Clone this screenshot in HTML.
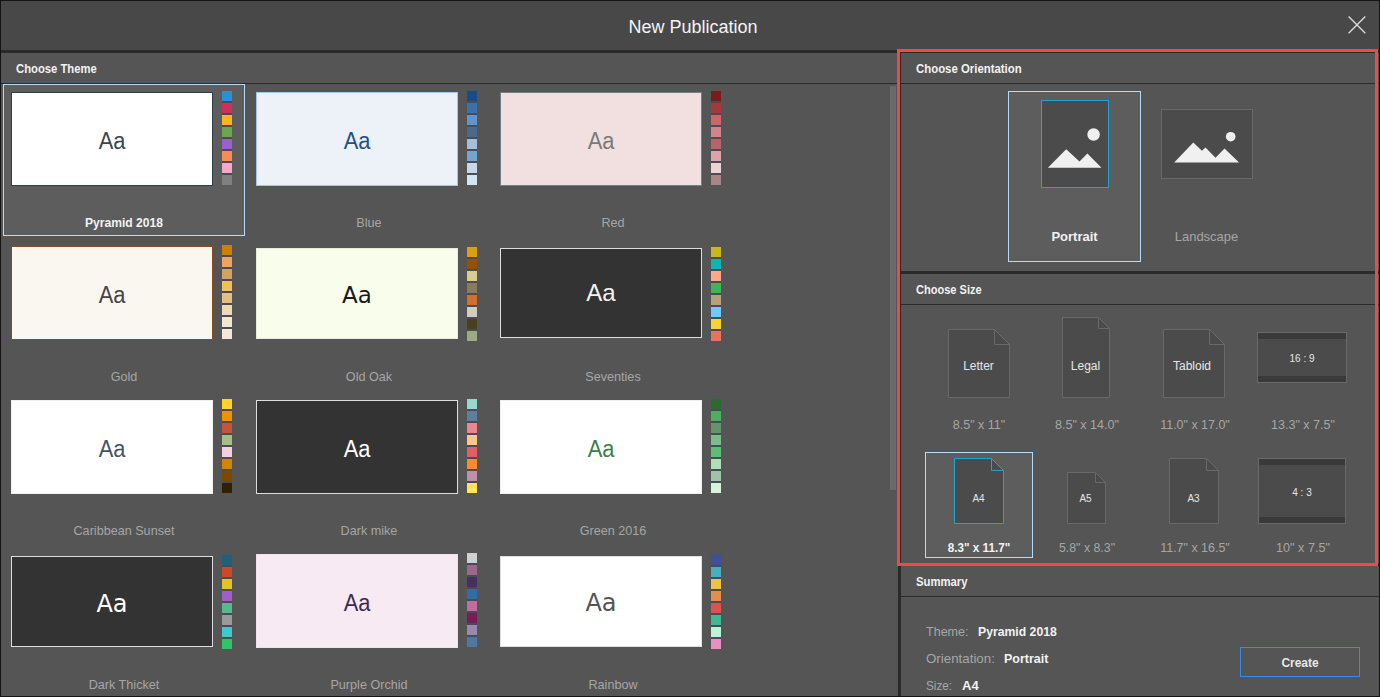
<!DOCTYPE html>
<html lang="en">
<head>
<meta charset="utf-8">
<title>New Publication</title>
<style>
html,body{margin:0;padding:0;}
body{width:1380px;height:697px;overflow:hidden;position:relative;background:#555555;font-family:"Liberation Sans", sans-serif;}
.r{position:absolute;box-sizing:content-box;}
.t{position:absolute;line-height:20px;white-space:nowrap;}
.pv{text-align:center;}
</style>
</head>
<body>
<div class="r" style="left:0px;top:0px;width:1380px;height:697px;background:#141414;"></div>
<div class="r" style="left:1px;top:1px;width:1378px;height:49px;background:#484848;"></div>
<div class="r" style="left:1px;top:50px;width:1378px;height:3px;background:#2a2a2a;"></div>
<div class="r" style="left:1px;top:53px;width:897px;height:643px;background:#555555;"></div>
<div class="r" style="left:898px;top:50px;width:3px;height:646px;background:#2a2a2a;"></div>
<div class="r" style="left:901px;top:53px;width:478px;height:643px;background:#555555;"></div>
<div class="t" style="top:17px;font-size:18px;color:#f4f4f4;left:543px;width:300px;text-align:center;">New Publication</div>
<svg class="r" style="left:1346px;top:14px" width="22" height="22" viewBox="0 0 22 22"><path d="M2.6 2.6 L19.3 19.3 M19.3 2.6 L2.6 19.3" stroke="#d8d8d8" stroke-width="1.4" fill="none"/></svg>
<div class="t" style="top:59px;font-size:12px;color:#f2f2f2;font-weight:bold;left:16px;transform:scaleX(0.938);transform-origin:0 50%;">Choose Theme</div>
<div class="r" style="left:1px;top:83px;width:897px;height:1px;background:#2a2a2a;"></div>
<div class="r" style="left:890px;top:86px;width:6px;height:404px;background:#6a6a6a;"></div>
<div class="r" style="left:3px;top:84px;width:240px;height:150px;background:#5d5d5d;border:1px solid #b4dcf8;"></div>
<div class="r" style="left:11px;top:92px;width:200px;height:92px;background:#ffffff;border:1px solid #2f4044;"></div>
<div class="t" style="top:131px;font-size:23px;color:#37474f;left:-38px;width:300px;text-align:center;transform:scaleX(0.95);transform-origin:50% 50%;">Aa</div>
<div class="r" style="left:222px;top:91px;width:10px;height:94px;background:#494c58;"></div>
<div class="r" style="left:222px;top:91px;width:10px;height:10px;background:#2b8fd8;"></div>
<div class="r" style="left:222px;top:103px;width:10px;height:10px;background:#d03058;"></div>
<div class="r" style="left:222px;top:115px;width:10px;height:10px;background:#fbb42a;"></div>
<div class="r" style="left:222px;top:127px;width:10px;height:10px;background:#6aa84f;"></div>
<div class="r" style="left:222px;top:139px;width:10px;height:10px;background:#9b5fd0;"></div>
<div class="r" style="left:222px;top:151px;width:10px;height:10px;background:#f88d54;"></div>
<div class="r" style="left:222px;top:163px;width:10px;height:10px;background:#f4a8c8;"></div>
<div class="r" style="left:222px;top:175px;width:10px;height:10px;background:#808080;"></div>
<div class="t" style="top:213px;font-size:13px;color:#f2f2f2;font-weight:bold;left:-26px;width:300px;text-align:center;transform:scaleX(0.93);transform-origin:50% 50%;">Pyramid 2018</div>
<div class="r" style="left:256px;top:92px;width:200px;height:92px;background:#edf2f9;border:1px solid #a5c5e8;"></div>
<div class="t" style="top:131px;font-size:23px;color:#1f4e8c;left:207px;width:300px;text-align:center;transform:scaleX(0.95);transform-origin:50% 50%;">Aa</div>
<div class="r" style="left:467px;top:91px;width:10px;height:94px;background:#494c58;"></div>
<div class="r" style="left:467px;top:91px;width:10px;height:10px;background:#144c8c;"></div>
<div class="r" style="left:467px;top:103px;width:10px;height:10px;background:#3a72b0;"></div>
<div class="r" style="left:467px;top:115px;width:10px;height:10px;background:#6294d0;"></div>
<div class="r" style="left:467px;top:127px;width:10px;height:10px;background:#4a6a8c;"></div>
<div class="r" style="left:467px;top:139px;width:10px;height:10px;background:#a6bedc;"></div>
<div class="r" style="left:467px;top:151px;width:10px;height:10px;background:#74a6d0;"></div>
<div class="r" style="left:467px;top:163px;width:10px;height:10px;background:#c8d8ec;"></div>
<div class="r" style="left:467px;top:175px;width:10px;height:10px;background:#d4e4f2;"></div>
<div class="t" style="top:213px;font-size:13px;color:#a6a6a6;left:219px;width:300px;text-align:center;transform:scaleX(0.97);transform-origin:50% 50%;">Blue</div>
<div class="r" style="left:500px;top:92px;width:200px;height:92px;background:#f2dfdf;border:1px solid #727e8a;"></div>
<div class="t" style="top:131px;font-size:23px;color:#7a7a7a;left:451px;width:300px;text-align:center;transform:scaleX(0.95);transform-origin:50% 50%;">Aa</div>
<div class="r" style="left:711px;top:91px;width:10px;height:94px;background:#494c58;"></div>
<div class="r" style="left:711px;top:91px;width:10px;height:10px;background:#7b1a1f;"></div>
<div class="r" style="left:711px;top:103px;width:10px;height:10px;background:#a8373b;"></div>
<div class="r" style="left:711px;top:115px;width:10px;height:10px;background:#cc666a;"></div>
<div class="r" style="left:711px;top:127px;width:10px;height:10px;background:#cf8589;"></div>
<div class="r" style="left:711px;top:139px;width:10px;height:10px;background:#b8636a;"></div>
<div class="r" style="left:711px;top:151px;width:10px;height:10px;background:#dca4a6;"></div>
<div class="r" style="left:711px;top:163px;width:10px;height:10px;background:#ebd4d4;"></div>
<div class="r" style="left:711px;top:175px;width:10px;height:10px;background:#a88688;"></div>
<div class="t" style="top:213px;font-size:13px;color:#a6a6a6;left:463px;width:300px;text-align:center;transform:scaleX(0.97);transform-origin:50% 50%;">Red</div>
<div class="r" style="left:11px;top:246px;width:200px;height:92px;background:#faf6f0;border:1px solid #8a4a1a;"></div>
<div class="t" style="top:285px;font-size:23px;color:#444444;left:-38px;width:300px;text-align:center;transform:scaleX(0.95);transform-origin:50% 50%;">Aa</div>
<div class="r" style="left:222px;top:245px;width:10px;height:94px;background:#494c58;"></div>
<div class="r" style="left:222px;top:245px;width:10px;height:10px;background:#cc8000;"></div>
<div class="r" style="left:222px;top:257px;width:10px;height:10px;background:#eba55c;"></div>
<div class="r" style="left:222px;top:269px;width:10px;height:10px;background:#cfa362;"></div>
<div class="r" style="left:222px;top:281px;width:10px;height:10px;background:#f0c05a;"></div>
<div class="r" style="left:222px;top:293px;width:10px;height:10px;background:#dfc085;"></div>
<div class="r" style="left:222px;top:305px;width:10px;height:10px;background:#ecd9b8;"></div>
<div class="r" style="left:222px;top:317px;width:10px;height:10px;background:#f3e6d3;"></div>
<div class="r" style="left:222px;top:329px;width:10px;height:10px;background:#f2e8da;"></div>
<div class="t" style="top:367px;font-size:13px;color:#a6a6a6;left:-26px;width:300px;text-align:center;transform:scaleX(0.97);transform-origin:50% 50%;">Gold</div>
<div class="r" style="left:256px;top:248px;width:200px;height:89px;background:#f9fdec;border:1px solid #e8ecdc;"></div>
<div class="t" style="top:285px;font-size:23px;color:#1a1a1a;font-family:'DejaVu Sans', sans-serif;left:207px;width:300px;text-align:center;">Aa</div>
<div class="r" style="left:467px;top:247px;width:10px;height:94px;background:#494c58;"></div>
<div class="r" style="left:467px;top:247px;width:10px;height:10px;background:#d9a10f;"></div>
<div class="r" style="left:467px;top:259px;width:10px;height:10px;background:#945200;"></div>
<div class="r" style="left:467px;top:271px;width:10px;height:10px;background:#d9cb8c;"></div>
<div class="r" style="left:467px;top:283px;width:10px;height:10px;background:#8a7b5f;"></div>
<div class="r" style="left:467px;top:295px;width:10px;height:10px;background:#d1702a;"></div>
<div class="r" style="left:467px;top:307px;width:10px;height:10px;background:#d3cdbd;"></div>
<div class="r" style="left:467px;top:319px;width:10px;height:10px;background:#4a4120;"></div>
<div class="r" style="left:467px;top:331px;width:10px;height:10px;background:#9aaa85;"></div>
<div class="t" style="top:367px;font-size:13px;color:#a6a6a6;left:219px;width:300px;text-align:center;transform:scaleX(0.97);transform-origin:50% 50%;">Old Oak</div>
<div class="r" style="left:500px;top:248px;width:200px;height:88px;background:#333333;border:1px solid #dddddd;"></div>
<div class="t" style="top:283px;font-size:24px;color:#f2f2f2;left:451px;width:300px;text-align:center;">Aa</div>
<div class="r" style="left:711px;top:247px;width:10px;height:94px;background:#494c58;"></div>
<div class="r" style="left:711px;top:247px;width:10px;height:10px;background:#c9b81a;"></div>
<div class="r" style="left:711px;top:259px;width:10px;height:10px;background:#0cb5b5;"></div>
<div class="r" style="left:711px;top:271px;width:10px;height:10px;background:#ffa98a;"></div>
<div class="r" style="left:711px;top:283px;width:10px;height:10px;background:#3fb554;"></div>
<div class="r" style="left:711px;top:295px;width:10px;height:10px;background:#b8a07a;"></div>
<div class="r" style="left:711px;top:307px;width:10px;height:10px;background:#70ccf7;"></div>
<div class="r" style="left:711px;top:319px;width:10px;height:10px;background:#f7d531;"></div>
<div class="r" style="left:711px;top:331px;width:10px;height:10px;background:#e8735f;"></div>
<div class="t" style="top:367px;font-size:13px;color:#a6a6a6;left:463px;width:300px;text-align:center;transform:scaleX(0.97);transform-origin:50% 50%;">Seventies</div>
<div class="r" style="left:11px;top:400px;width:200px;height:92px;background:#ffffff;border:1px solid #f0f0f0;"></div>
<div class="t" style="top:439px;font-size:23px;color:#3f5566;left:-38px;width:300px;text-align:center;transform:scaleX(0.95);transform-origin:50% 50%;">Aa</div>
<div class="r" style="left:222px;top:399px;width:10px;height:94px;background:#494c58;"></div>
<div class="r" style="left:222px;top:399px;width:10px;height:10px;background:#ffd42a;"></div>
<div class="r" style="left:222px;top:411px;width:10px;height:10px;background:#eb9400;"></div>
<div class="r" style="left:222px;top:423px;width:10px;height:10px;background:#c0563a;"></div>
<div class="r" style="left:222px;top:435px;width:10px;height:10px;background:#a8bc85;"></div>
<div class="r" style="left:222px;top:447px;width:10px;height:10px;background:#f2d0e0;"></div>
<div class="r" style="left:222px;top:459px;width:10px;height:10px;background:#d48500;"></div>
<div class="r" style="left:222px;top:471px;width:10px;height:10px;background:#7a4a00;"></div>
<div class="r" style="left:222px;top:483px;width:10px;height:10px;background:#2e2000;"></div>
<div class="t" style="top:521px;font-size:13px;color:#a6a6a6;left:-26px;width:300px;text-align:center;transform:scaleX(0.97);transform-origin:50% 50%;">Caribbean Sunset</div>
<div class="r" style="left:256px;top:400px;width:200px;height:92px;background:#333333;border:1px solid #dddddd;"></div>
<div class="t" style="top:439px;font-size:23px;color:#ffffff;left:207px;width:300px;text-align:center;transform:scaleX(0.95);transform-origin:50% 50%;">Aa</div>
<div class="r" style="left:467px;top:399px;width:10px;height:94px;background:#494c58;"></div>
<div class="r" style="left:467px;top:399px;width:10px;height:10px;background:#96d9cc;"></div>
<div class="r" style="left:467px;top:411px;width:10px;height:10px;background:#5f7d9c;"></div>
<div class="r" style="left:467px;top:423px;width:10px;height:10px;background:#ed8591;"></div>
<div class="r" style="left:467px;top:435px;width:10px;height:10px;background:#fac78a;"></div>
<div class="r" style="left:467px;top:447px;width:10px;height:10px;background:#e0606a;"></div>
<div class="r" style="left:467px;top:459px;width:10px;height:10px;background:#ff8a2b;"></div>
<div class="r" style="left:467px;top:471px;width:10px;height:10px;background:#c08fa8;"></div>
<div class="r" style="left:467px;top:483px;width:10px;height:10px;background:#ffe55c;"></div>
<div class="t" style="top:521px;font-size:13px;color:#a6a6a6;left:219px;width:300px;text-align:center;transform:scaleX(0.97);transform-origin:50% 50%;">Dark mike</div>
<div class="r" style="left:500px;top:400px;width:200px;height:92px;background:#ffffff;border:1px solid #f0f0f0;"></div>
<div class="t" style="top:439px;font-size:23px;color:#3d8047;left:451px;width:300px;text-align:center;transform:scaleX(0.95);transform-origin:50% 50%;">Aa</div>
<div class="r" style="left:711px;top:399px;width:10px;height:94px;background:#494c58;"></div>
<div class="r" style="left:711px;top:399px;width:10px;height:10px;background:#2d6a2f;"></div>
<div class="r" style="left:711px;top:411px;width:10px;height:10px;background:#4cae5e;"></div>
<div class="r" style="left:711px;top:423px;width:10px;height:10px;background:#649468;"></div>
<div class="r" style="left:711px;top:435px;width:10px;height:10px;background:#78be8c;"></div>
<div class="r" style="left:711px;top:447px;width:10px;height:10px;background:#5abf72;"></div>
<div class="r" style="left:711px;top:459px;width:10px;height:10px;background:#ade0b8;"></div>
<div class="r" style="left:711px;top:471px;width:10px;height:10px;background:#9cc4a8;"></div>
<div class="r" style="left:711px;top:483px;width:10px;height:10px;background:#d8f3dc;"></div>
<div class="t" style="top:521px;font-size:13px;color:#a6a6a6;left:463px;width:300px;text-align:center;transform:scaleX(0.97);transform-origin:50% 50%;">Green 2016</div>
<div class="r" style="left:11px;top:556px;width:200px;height:89px;background:#333333;border:1px solid #dddddd;"></div>
<div class="t" style="top:594px;font-size:24px;color:#ffffff;font-family:'DejaVu Sans', sans-serif;left:-38px;width:300px;text-align:center;">Aa</div>
<div class="r" style="left:222px;top:555px;width:10px;height:94px;background:#494c58;"></div>
<div class="r" style="left:222px;top:555px;width:10px;height:10px;background:#1f5f82;"></div>
<div class="r" style="left:222px;top:567px;width:10px;height:10px;background:#c84a2a;"></div>
<div class="r" style="left:222px;top:579px;width:10px;height:10px;background:#e0c420;"></div>
<div class="r" style="left:222px;top:591px;width:10px;height:10px;background:#a05fc8;"></div>
<div class="r" style="left:222px;top:603px;width:10px;height:10px;background:#58b890;"></div>
<div class="r" style="left:222px;top:615px;width:10px;height:10px;background:#9a9a9a;"></div>
<div class="r" style="left:222px;top:627px;width:10px;height:10px;background:#40c8cc;"></div>
<div class="r" style="left:222px;top:639px;width:10px;height:10px;background:#30c464;"></div>
<div class="t" style="top:675px;font-size:13px;color:#a6a6a6;left:-26px;width:300px;text-align:center;transform:scaleX(0.97);transform-origin:50% 50%;">Dark Thicket</div>
<div class="r" style="left:256px;top:554px;width:200px;height:92px;background:#f7eaf3;border:1px solid #f0e0ec;"></div>
<div class="t" style="top:593px;font-size:23px;color:#3f2a55;left:207px;width:300px;text-align:center;transform:scaleX(0.95);transform-origin:50% 50%;">Aa</div>
<div class="r" style="left:467px;top:553px;width:10px;height:94px;background:#494c58;"></div>
<div class="r" style="left:467px;top:553px;width:10px;height:10px;background:#d0d0d0;"></div>
<div class="r" style="left:467px;top:565px;width:10px;height:10px;background:#9c6888;"></div>
<div class="r" style="left:467px;top:577px;width:10px;height:10px;background:#44305c;"></div>
<div class="r" style="left:467px;top:589px;width:10px;height:10px;background:#2f6da8;"></div>
<div class="r" style="left:467px;top:601px;width:10px;height:10px;background:#c06c9c;"></div>
<div class="r" style="left:467px;top:613px;width:10px;height:10px;background:#7a1c58;"></div>
<div class="r" style="left:467px;top:625px;width:10px;height:10px;background:#9a88b0;"></div>
<div class="r" style="left:467px;top:637px;width:10px;height:10px;background:#4c78a4;"></div>
<div class="t" style="top:675px;font-size:13px;color:#a6a6a6;left:219px;width:300px;text-align:center;transform:scaleX(0.97);transform-origin:50% 50%;">Purple Orchid</div>
<div class="r" style="left:500px;top:556px;width:200px;height:89px;background:#ffffff;border:1px solid #e0e0e0;"></div>
<div class="t" style="top:593px;font-size:24px;color:#555555;font-family:'DejaVu Sans', sans-serif;left:451px;width:300px;text-align:center;">Aa</div>
<div class="r" style="left:711px;top:555px;width:10px;height:94px;background:#494c58;"></div>
<div class="r" style="left:711px;top:555px;width:10px;height:10px;background:#3f4fa0;"></div>
<div class="r" style="left:711px;top:567px;width:10px;height:10px;background:#4aaec0;"></div>
<div class="r" style="left:711px;top:579px;width:10px;height:10px;background:#f0c04a;"></div>
<div class="r" style="left:711px;top:591px;width:10px;height:10px;background:#e09048;"></div>
<div class="r" style="left:711px;top:603px;width:10px;height:10px;background:#e05050;"></div>
<div class="r" style="left:711px;top:615px;width:10px;height:10px;background:#40b890;"></div>
<div class="r" style="left:711px;top:627px;width:10px;height:10px;background:#b8f5d8;"></div>
<div class="r" style="left:711px;top:639px;width:10px;height:10px;background:#e890c0;"></div>
<div class="t" style="top:675px;font-size:13px;color:#a6a6a6;left:463px;width:300px;text-align:center;transform:scaleX(0.97);transform-origin:50% 50%;">Rainbow</div>
<div class="t" style="top:59px;font-size:12px;color:#f2f2f2;font-weight:bold;left:916px;transform:scaleX(0.949);transform-origin:0 50%;">Choose Orientation</div>
<div class="r" style="left:901px;top:83px;width:478px;height:1px;background:#2a2a2a;"></div>
<div class="r" style="left:1008px;top:91px;width:131px;height:169px;background:#5d5d5d;border:1px solid #b4dcf8;"></div>
<svg class="r" style="left:1041px;top:100px" width="68" height="88" viewBox="0 0 68 88">
<rect x="0.5" y="0.5" width="67" height="87" fill="#4b4b4b" stroke="#1ea3d6"/>
<circle cx="52.6" cy="34.5" r="6.25" fill="#f0f0f0"/>
<path d="M6.9 67.8 L25.2 49.3 L38.5 61.5 L46.4 53.4 L60.5 67.8 Z" fill="#f0f0f0"/>
</svg>
<div class="t" style="top:227px;font-size:13px;color:#f2f2f2;font-weight:bold;left:924.5px;width:300px;text-align:center;">Portrait</div>
<svg class="r" style="left:1161px;top:109px" width="92" height="70" viewBox="0 0 92 70">
<rect x="0.5" y="0.5" width="91" height="69" fill="#4b4b4b" stroke="#696969"/>
<circle cx="69.7" cy="27.7" r="4.8" fill="#f0f0f0"/>
<path d="M13.2 53.6 L32.3 33.6 L40.9 41.8 L44.5 38.4 L54.5 48.7 L63.5 39.4 L78.1 53.6 Z" fill="#f0f0f0"/>
</svg>
<div class="t" style="top:227px;font-size:13px;color:#a6a6a6;left:1056.5px;width:300px;text-align:center;">Landscape</div>
<div class="r" style="left:901px;top:271px;width:478px;height:3px;background:#2a2a2a;"></div>
<div class="t" style="top:280px;font-size:12px;color:#f2f2f2;font-weight:bold;left:916px;transform:scaleX(0.92);transform-origin:0 50%;">Choose Size</div>
<div class="r" style="left:901px;top:304px;width:478px;height:1px;background:#2a2a2a;"></div>
<svg class="r" style="left:948px;top:329px" width="62" height="69" viewBox="0 0 62 69"><path d="M0.5 0.5 H46.5 L61.5 15.5 V68.5 H0.5 Z" fill="#4b4b4b" stroke="#696969"/><path d="M46.5 0.5 V15.5 H61.5" fill="none" stroke="#696969"/></svg>
<div class="t" style="top:356px;font-size:12px;color:#e6e6e6;left:828.5px;width:300px;text-align:center;">Letter</div>
<svg class="r" style="left:1062px;top:317px" width="48" height="81" viewBox="0 0 48 81"><path d="M0.5 0.5 H36.5 L47.5 11.5 V80.5 H0.5 Z" fill="#4b4b4b" stroke="#696969"/><path d="M36.5 0.5 V11.5 H47.5" fill="none" stroke="#696969"/></svg>
<div class="t" style="top:356px;font-size:12px;color:#e6e6e6;left:935.5px;width:300px;text-align:center;">Legal</div>
<svg class="r" style="left:1163px;top:329px" width="62" height="69" viewBox="0 0 62 69"><path d="M0.5 0.5 H46.5 L61.5 15.5 V68.5 H0.5 Z" fill="#4b4b4b" stroke="#696969"/><path d="M46.5 0.5 V15.5 H61.5" fill="none" stroke="#696969"/></svg>
<div class="t" style="top:356px;font-size:12px;color:#e6e6e6;left:1042px;width:300px;text-align:center;">Tabloid</div>
<svg class="r" style="left:1257px;top:332px" width="90" height="51" viewBox="0 0 90 51"><rect x="0.5" y="0.5" width="89" height="50" fill="#4b4b4b" stroke="#696969"/><rect x="1" y="1" width="88" height="6" fill="#3a3a3a"/><rect x="1" y="44" width="88" height="6" fill="#3a3a3a"/></svg>
<div class="t" style="top:349px;font-size:10px;color:#e6e6e6;left:1152px;width:300px;text-align:center;">16 : 9</div>
<div class="t" style="top:415px;font-size:13px;color:#a6a6a6;left:829px;width:300px;text-align:center;transform:scaleX(0.965);transform-origin:50% 50%;">8.5" x 11"</div>
<div class="t" style="top:415px;font-size:13px;color:#a6a6a6;left:936.5px;width:300px;text-align:center;transform:scaleX(0.965);transform-origin:50% 50%;">8.5" x 14.0"</div>
<div class="t" style="top:415px;font-size:13px;color:#a6a6a6;left:1044.5px;width:300px;text-align:center;transform:scaleX(0.958);transform-origin:50% 50%;">11.0" x 17.0"</div>
<div class="t" style="top:415px;font-size:13px;color:#a6a6a6;left:1152.5px;width:300px;text-align:center;transform:scaleX(0.965);transform-origin:50% 50%;">13.3" x 7.5"</div>
<div class="r" style="left:925px;top:452px;width:106px;height:104px;background:#5d5d5d;border:1px solid #b4dcf8;"></div>
<svg class="r" style="left:954px;top:458px" width="50" height="66" viewBox="0 0 50 66"><path d="M0.5 0.5 H37.5 L49.5 12.5 V65.5 H0.5 Z" fill="#4b4b4b" stroke="#1ea3d6"/><path d="M37.5 0.5 V12.5 H49.5" fill="none" stroke="#1ea3d6"/></svg>
<div class="t" style="top:489px;font-size:10px;color:#e6e6e6;left:828.5px;width:300px;text-align:center;">A4</div>
<svg class="r" style="left:1067px;top:472px" width="39" height="52" viewBox="0 0 39 52"><path d="M0.5 0.5 H28.5 L38.5 10.5 V51.5 H0.5 Z" fill="#4b4b4b" stroke="#696969"/><path d="M28.5 0.5 V10.5 H38.5" fill="none" stroke="#696969"/></svg>
<div class="t" style="top:489px;font-size:10px;color:#e6e6e6;left:935.5px;width:300px;text-align:center;">A5</div>
<svg class="r" style="left:1169px;top:458px" width="50" height="66" viewBox="0 0 50 66"><path d="M0.5 0.5 H37.5 L49.5 12.5 V65.5 H0.5 Z" fill="#4b4b4b" stroke="#696969"/><path d="M37.5 0.5 V12.5 H49.5" fill="none" stroke="#696969"/></svg>
<div class="t" style="top:489px;font-size:10px;color:#e6e6e6;left:1043.5px;width:300px;text-align:center;">A3</div>
<svg class="r" style="left:1258px;top:458px" width="88" height="66" viewBox="0 0 88 66"><rect x="0.5" y="0.5" width="87" height="65" fill="#4b4b4b" stroke="#696969"/><rect x="1" y="1" width="86" height="6" fill="#3a3a3a"/><rect x="1" y="59" width="86" height="6" fill="#3a3a3a"/></svg>
<div class="t" style="top:483px;font-size:10px;color:#e6e6e6;left:1152px;width:300px;text-align:center;">4 : 3</div>
<div class="t" style="top:538px;font-size:13px;color:#f2f2f2;font-weight:bold;left:829px;width:300px;text-align:center;transform:scaleX(0.9);transform-origin:50% 50%;">8.3" x 11.7"</div>
<div class="t" style="top:538px;font-size:13px;color:#a6a6a6;left:936.5px;width:300px;text-align:center;transform:scaleX(0.95);transform-origin:50% 50%;">5.8" x 8.3"</div>
<div class="t" style="top:538px;font-size:13px;color:#a6a6a6;left:1044.5px;width:300px;text-align:center;transform:scaleX(0.958);transform-origin:50% 50%;">11.7" x 16.5"</div>
<div class="t" style="top:538px;font-size:13px;color:#a6a6a6;left:1152.5px;width:300px;text-align:center;transform:scaleX(0.97);transform-origin:50% 50%;">10" x 7.5"</div>
<div class="r" style="left:901px;top:563px;width:478px;height:3px;background:#2a2a2a;"></div>
<div class="t" style="top:572px;font-size:12px;color:#f2f2f2;font-weight:bold;left:916px;transform:scaleX(0.94);transform-origin:0 50%;">Summary</div>
<div class="r" style="left:901px;top:596px;width:478px;height:1px;background:#2a2a2a;"></div>
<div class="t" style="top:622px;font-size:13px;color:#a6a6a6;left:926px;transform:scaleX(0.965);transform-origin:0 50%;">Theme:</div>
<div class="t" style="top:622px;font-size:13px;color:#f2f2f2;font-weight:bold;left:978px;transform:scaleX(0.94);transform-origin:0 50%;">Pyramid 2018</div>
<div class="t" style="top:649px;font-size:13px;color:#a6a6a6;left:926px;transform:scaleX(1.025);transform-origin:0 50%;">Orientation:</div>
<div class="t" style="top:649px;font-size:13px;color:#f2f2f2;font-weight:bold;left:1004px;transform:scaleX(0.96);transform-origin:0 50%;">Portrait</div>
<div class="t" style="top:676px;font-size:13px;color:#a6a6a6;left:926px;transform:scaleX(0.9);transform-origin:0 50%;">Size:</div>
<div class="t" style="top:676px;font-size:13px;color:#f2f2f2;font-weight:bold;left:962px;">A4</div>
<div class="r" style="left:1240px;top:647px;width:118px;height:28px;background:transparent;border:1px solid #3b8af0;"></div>
<div class="t" style="top:653px;font-size:13px;color:#e8e8e8;font-weight:bold;left:1150px;width:300px;text-align:center;transform:scaleX(0.92);transform-origin:50% 50%;">Create</div>
<div class="r" style="left:897px;top:49px;width:475px;height:511px;border:3px solid #ee4b45;"></div>
<div class="r" style="left:0px;top:696px;width:1380px;height:1px;background:#141414;"></div>
</body>
</html>
